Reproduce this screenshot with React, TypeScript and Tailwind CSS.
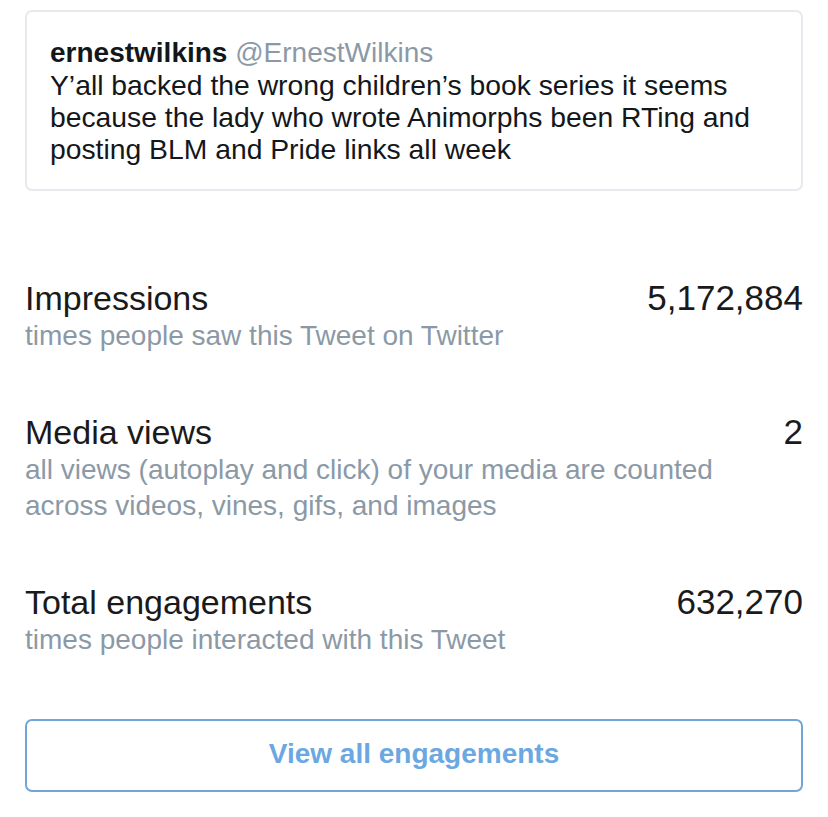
import React from "react";

const font = { fontFamily: '"Liberation Sans", Arial, sans-serif' };

function Stat({ title, value, sub }: { title: string; value: string; sub: React.ReactNode }) {
  return (
    <div className="flex flex-col">
      <div className="flex items-center justify-between leading-[38px] text-[#1a1a1a]">
        <span className="text-[34px]">{title}</span>
        <span className="text-[35px]">{value}</span>
      </div>
      <div className="text-[28px] leading-[36px] text-[#8b99a6] pt-[1px]">{sub}</div>
    </div>
  );
}

export default function App() {
  return (
    <div className="w-[828px] h-[817px] bg-white px-[25px] pt-[10px]" style={font}>
      <div className="rounded-[7px] border-2 border-[#e6eaee] pl-[23px] pr-[20px] pt-[25px] pb-[22px] h-[181px]">
        <div className="text-[28px] leading-[32px] text-[#14171a]">
          <span className="font-bold">ernestwilkins</span>{" "}
          <span className="text-[#8b99a6]">@ErnestWilkins</span>
        </div>
        <div className="text-[28.3px] leading-[32px] text-[#14171a]">
          Y’all backed the wrong children’s book series it seems because the lady who wrote Animorphs been RTing and
          posting BLM and Pride links all week
        </div>
      </div>

      <div className="mt-[88px] flex flex-col gap-[59px]">
        <Stat title="Impressions" value="5,172,884" sub="times people saw this Tweet on Twitter" />
        <Stat
          title="Media views"
          value="2"
          sub={
            <>
              all views (autoplay and click) of your media are counted
              <br />
              across videos, vines, gifs, and images
            </>
          }
        />
        <Stat title="Total engagements" value="632,270" sub="times people interacted with this Tweet" />
      </div>

      <button className="mt-[61px] w-full h-[73px] rounded-[7px] border-2 border-[#72a6d8] flex items-center justify-center pb-[3px] text-[28px] font-bold text-[#6ba8e2]">
        View all engagements
      </button>
    </div>
  );
}
